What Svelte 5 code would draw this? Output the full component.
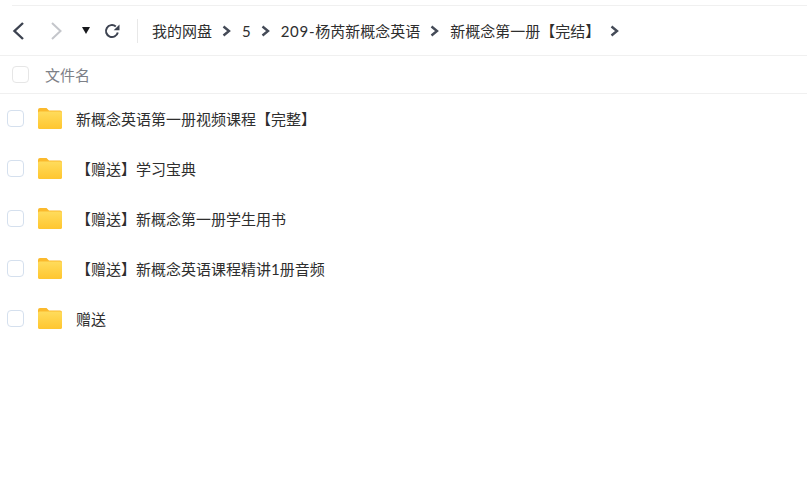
<script>
  const crumbs = [
    { lead: '', text: '我的网盘' },
    { lead: '', text: '5' },
    { lead: '209-', text: '杨芮新概念英语' },
    { lead: '', text: '新概念第一册【完结】' }
  ];
  const files = ['新概念英语第一册视频课程【完整】', '【赠送】学习宝典', '【赠送】新概念第一册学生用书', '【赠送】新概念英语课程精讲1册音频', '赠送'];
</script>

<div class="page">
  <div class="toolbar">
    <button class="nav back" aria-label="后退">
      <svg width="14" height="20" viewBox="0 0 14 20"><path d="M12 2 3.500 10l8.500 8" fill="none" stroke="#3c4250" stroke-width="2.400"/></svg>
    </button>
    <button class="nav forward" aria-label="前进">
      <svg width="14" height="20" viewBox="0 0 14 20"><path d="M2 2l8.500 8L2 18" fill="none" stroke="#c4c6cb" stroke-width="2"/></svg>
    </button>
    <button class="nav caret" aria-label="历史">
      <svg width="8" height="7" viewBox="0 0 8 7"><path d="M0 0h8L4 7z" fill="#17181c"/></svg>
    </button>
    <button class="nav refresh" aria-label="刷新">
      <svg width="16" height="16" viewBox="0 0 16 16"><path d="M13.800 9.500A6 6 0 1 1 11.800 3.400" fill="none" stroke="#3c4250" stroke-width="2"/><path d="M15.500 1.500v5.800H9.700z" fill="#3c4250"/></svg>
    </button>
    <div class="divider"></div>
    <nav class="crumbs">
      {#each crumbs as crumb}
        <span class="crumb"><span class="lead">{crumb.lead}</span>{crumb.text}</span>
        <svg class="sep" width="9" height="12" viewBox="0 0 9 12"><path d="M1.500 1.500 7 6l-5.500 4.500" fill="none" stroke="#444a57" stroke-width="2.400"/></svg>
      {/each}
    </nav>
  </div>

  <div class="header">
    <span class="check head-check"></span>
    <span class="title">文件名</span>
  </div>

  <ul class="list">
    {#each files as file}
      <li class="row">
        <span class="check"></span>
        <svg class="folder" width="26" height="24" viewBox="0 0 26 24">
          <defs>
            <linearGradient id="fg" x1="0" y1="0" x2="0" y2="1"><stop offset="0" stop-color="#ffdc5c"/><stop offset="1" stop-color="#ffc62f"/></linearGradient>
          </defs>
          <path d="M1 4a2 2 0 0 1 2-2h6.500l2.500 2.500h11a2 2 0 0 1 2 2V21a2 2 0 0 1-2 2H3a2 2 0 0 1-2-2z" fill="#fbb92c"/>
          <path d="M1 7a1.500 1.500 0 0 1 1.500-1.500h21A1.500 1.500 0 0 1 25 7v14a2 2 0 0 1-2 2H3a2 2 0 0 1-2-2z" fill="url(#fg)"/>
        </svg>
        <span class="name">{file}</span>
      </li>
    {/each}
  </ul>
</div>

<style>
  :global(body) {
    margin: 0;
    background: #fff;
  }
  .page {
    width: 807px;
    height: 495px;
    overflow: hidden;
    padding-top: 5px;
    box-sizing: border-box;
    font-family: Lato, "Noto Sans CJK SC", sans-serif;
    font-size: 15px;
    color: #2e2e2e;
  }
  .toolbar {
    height: 50px;
    box-sizing: border-box;
    margin-left: 12px;
    border-top: 1px solid #f0f0f0;
    display: flex;
    align-items: center;
  }
  .nav {
    border: 0;
    background: none;
    padding: 0;
    display: flex;
    align-items: center;
    justify-content: center;
  }
  .back { width: 14px; margin-left: -1px; }
  .forward { width: 14px; margin-left: 25px; }
  .caret { width: 8px; margin-left: 18px; }
  .refresh { width: 16px; margin-left: 14px; }
  .divider {
    width: 1px;
    height: 24px;
    background: #e8e8e8;
    margin-left: 17px;
  }
  .crumbs {
    display: flex;
    align-items: center;
    margin-left: 14px;
  }
  .crumb { white-space: nowrap; }
  .lead { letter-spacing: 0.7px; }
  .sep { margin: 0 11px 0 10px; }
  .header {
    height: 38px;
    box-sizing: border-box;
    border-top: 1px solid #f0f0f0;
    box-shadow: 0 1px 0 #f0f0f0;
    display: flex;
    align-items: center;
    padding-left: 12px;
  }
  .check {
    width: 17px;
    height: 17px;
    box-sizing: border-box;
    border: 1.500px solid #d5e0ee;
    border-radius: 4px;
    flex: none;
  }
  .head-check { border-color: #e6e6e6; }
  .title {
    margin-left: 16px;
    color: #7d8087;
  }
  .list {
    list-style: none;
    margin: 0;
    padding: 0;
  }
  .row {
    height: 50px;
    display: flex;
    align-items: center;
    padding-left: 7px;
  }
  .folder {
    margin-left: 13px;
    flex: none;
  }
  .name {
    margin-left: 13px;
    white-space: nowrap;
  }
</style>
